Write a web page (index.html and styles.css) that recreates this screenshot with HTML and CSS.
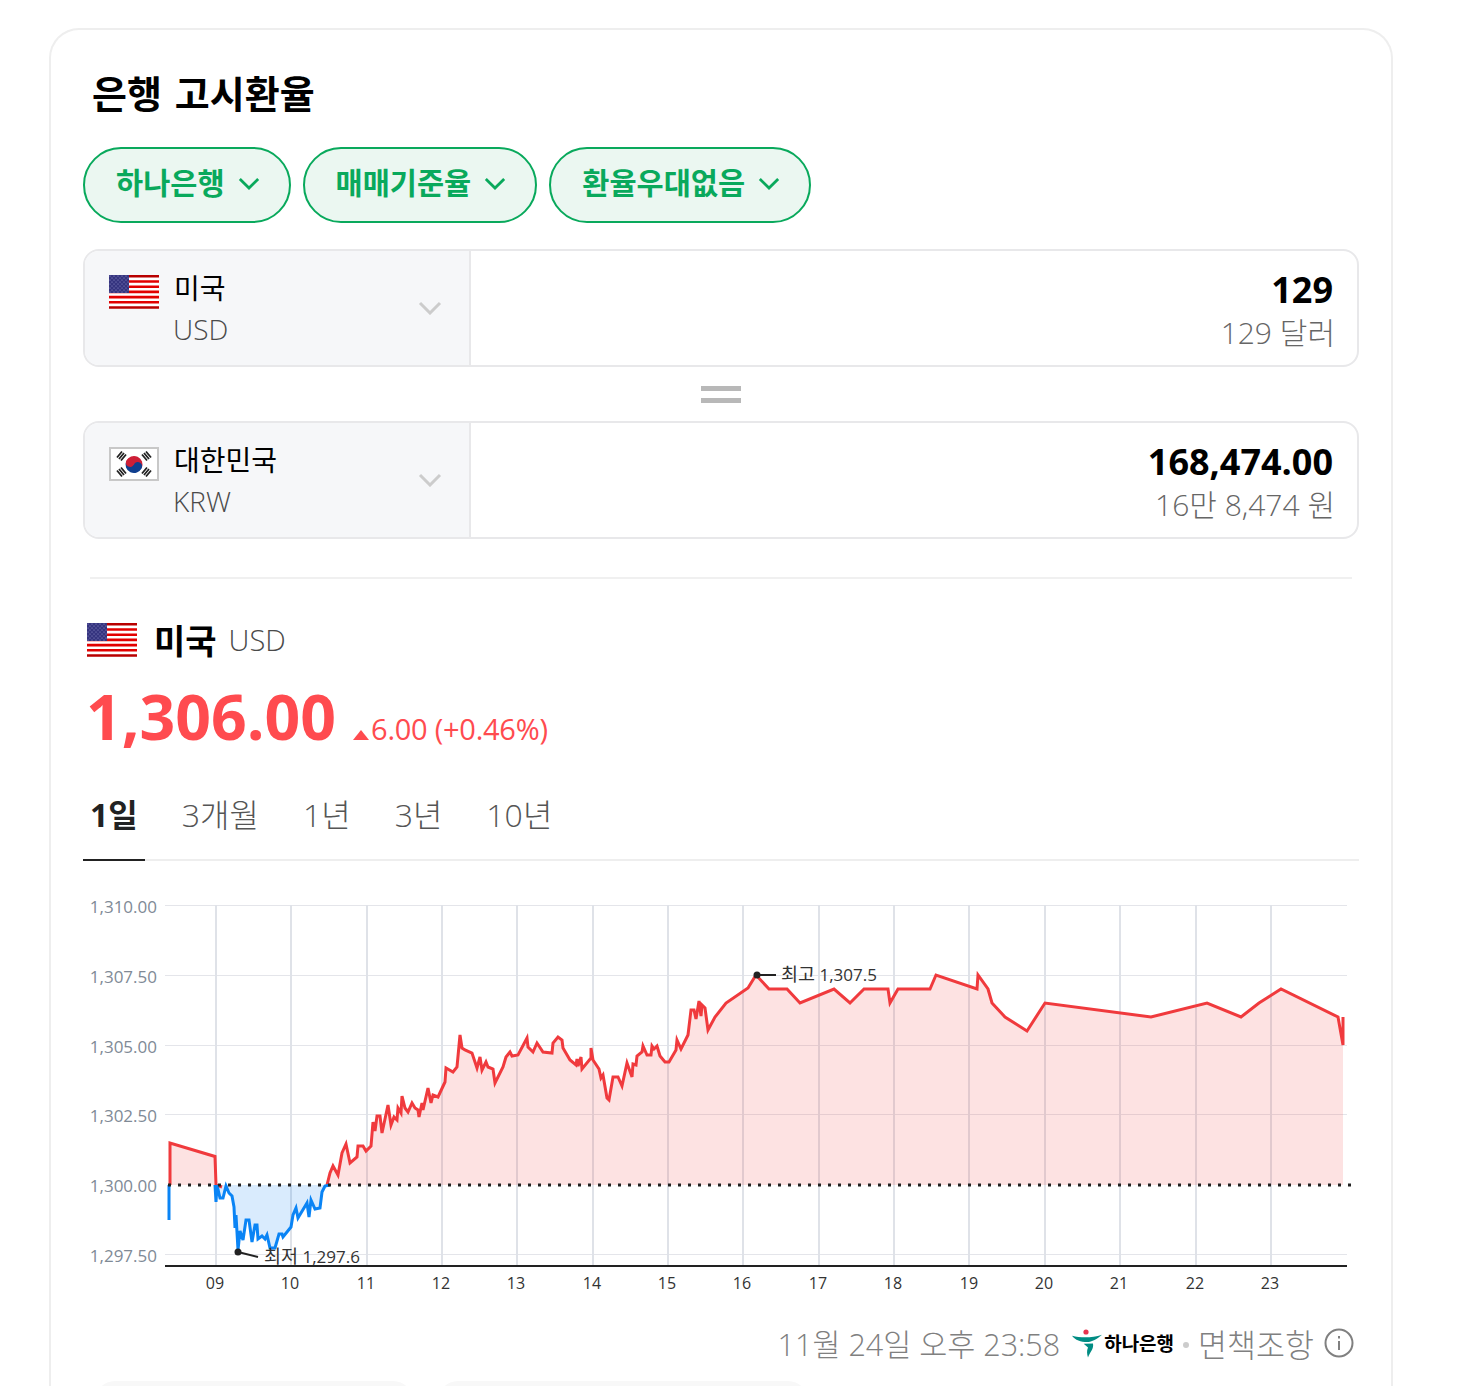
FILE: index.html
```html
<!DOCTYPE html>
<html lang="ko">
<head>
    <meta charset="UTF-8">
    <meta name="viewport" content="width=device-width, initial-scale=1.0">
    <title>은행 고시환율</title>
    <link rel="stylesheet" href="styles.css">
</head>
<body>
    <svg class="defs" width="0" height="0">
        <defs>
            <pattern id="stars" width="4" height="4" patternUnits="userSpaceOnUse">
                <rect width="4" height="4" fill="#35347f"/>
                <circle cx="1" cy="1" r="0.500" fill="#a9a8e0"/>
                <circle cx="3" cy="3" r="0.500" fill="#a9a8e0"/>
            </pattern>
            <symbol id="flag-us" viewBox="0 0 50 34">
                <rect width="50" height="34" fill="#fff"/>
                <path d="M0 6.500h50M0 11.700h50M0 16.900h50M0 22.100h50M0 27.300h50" stroke="#e20000" stroke-width="2.600"/>
                <path d="M0 1.300h50M0 32.500h50" stroke="#b80000" stroke-width="2.600"/>
                <rect width="20" height="18" fill="url(#stars)"/>
            </symbol>
            <symbol id="flag-kr" viewBox="0 0 50 34">
                <rect x="1" y="1" width="48" height="32" fill="#fff" stroke="#c8c8c8" stroke-width="2"/>
                <g transform="rotate(25 25 17.500)">
                    <path d="M16.500 17.500a8.500 8.500 0 0 1 17 0z" fill="#cd1f36"/>
                    <path d="M16.500 17.500a8.500 8.500 0 0 0 17 0z" fill="#0f3f8f"/>
                    <circle cx="20.750" cy="17.500" r="4.250" fill="#cd1f36"/>
                    <circle cx="29.250" cy="17.500" r="4.250" fill="#0f3f8f"/>
                </g>
                <g stroke="#222" stroke-width="1.800">
                    <path d="M8 10.500l5-6M10 12l5-6M12 13.500l5-6"/>
                    <path d="M33 7.500l5 6M35 6l5 6M37 4.500l5 6"/>
                    <path d="M8 23.500l5 6M10 22l5 6M12 20.500l5 6"/>
                    <path d="M33 26.500l5-6M35 28l5-6M37 29.500l5-6"/>
                </g>
            </symbol>
        </defs>
    </svg>

    <div class="card">
        <h1 class="title">은행 고시환율</h1>

        <div class="chips">
            <button class="chip"><span class="chip-label">하나은행</span>
                <svg class="chip-arrow" viewBox="0 0 24 14"><path d="M2 2l10 10L22 2"/></svg>
            </button>
            <button class="chip"><span class="chip-label">매매기준율</span>
                <svg class="chip-arrow" viewBox="0 0 24 14"><path d="M2 2l10 10L22 2"/></svg>
            </button>
            <button class="chip"><span class="chip-label">환율우대없음</span>
                <svg class="chip-arrow" viewBox="0 0 24 14"><path d="M2 2l10 10L22 2"/></svg>
            </button>
        </div>

        <div class="convert">
            <div class="convert-left">
                <svg class="flag"><use href="#flag-us"/></svg>
                <div class="country">
                    <div class="country-name">미국</div>
                    <div class="country-code">USD</div>
                </div>
                <svg class="select-arrow" viewBox="0 0 24 14"><path d="M2 2l10 10L22 2"/></svg>
            </div>
            <div class="convert-right">
                <div class="amount">129</div>
                <div class="amount-text">129 달러</div>
            </div>
        </div>

        <div class="equals"><span></span><span></span></div>

        <div class="convert">
            <div class="convert-left">
                <svg class="flag"><use href="#flag-kr"/></svg>
                <div class="country">
                    <div class="country-name">대한민국</div>
                    <div class="country-code">KRW</div>
                </div>
                <svg class="select-arrow" viewBox="0 0 24 14"><path d="M2 2l10 10L22 2"/></svg>
            </div>
            <div class="convert-right">
                <div class="amount">168,474.00</div>
                <div class="amount-text">16만 8,474 원</div>
            </div>
        </div>

        <hr class="divider">

        <div class="rate-head">
            <svg class="flag"><use href="#flag-us"/></svg>
            <span class="rate-name">미국</span>
            <span class="rate-code">USD</span>
        </div>

        <div class="price">
            <span class="price-now">1,306.00</span>
            <span class="price-up"></span>
            <span class="price-diff">6.00 (+0.46%)</span>
        </div>

        <div class="tabs">
            <a class="tab active">1일</a>
            <a class="tab">3개월</a>
            <a class="tab">1년</a>
            <a class="tab">3년</a>
            <a class="tab">10년</a>
        </div>

        <svg class="chart" viewBox="83 880 1276 420">
            <g class="grid">
                <path d="M165 905.500H1347M165 975.500H1347M165 1045.500H1347M165 1114.500H1347M165 1254.500H1347"/>
                <path d="M216 905V1265M291 905V1265M367 905V1265M442 905V1265M517 905V1265M593 905V1265M668 905V1265M743 905V1265M819 905V1265M894 905V1265M969 905V1265M1045 905V1265M1120 905V1265M1196 905V1265M1271 905V1265"/>
            </g>

            <g class="axis-y">
                <text x="157" y="913">1,310.00</text>
                <text x="157" y="983">1,307.50</text>
                <text x="157" y="1053">1,305.00</text>
                <text x="157" y="1122">1,302.50</text>
                <text x="157" y="1192">1,300.00</text>
                <text x="157" y="1262">1,297.50</text>
            </g>

            <path class="area-blue" d="M216 1185L217 1185 220 1198 223 1198 226 1186 229 1193 232 1196 234 1207 235 1228 236 1215 238 1250 240 1231 243 1240 246 1220 249 1220 252 1242 255 1225 257 1225 258 1239 262 1236 265 1239 267 1235 270 1248 275 1248 279 1234 282 1234 283 1237 291 1227 293 1215 296 1208 298 1218 307 1203 309 1217 311 1200 315 1209 320 1208 322 1192 325 1186 330 1185Z"/>
            <path class="area-red" d="M170 1185V1143L215 1156.500 216 1185ZM327 1185L330 1173 333 1166 338 1175 342 1153 346 1144 350 1163 357 1157 358 1146 363 1146 366 1151 371 1146 373 1122 375 1131 377 1116 380 1116 382 1133 388 1105 391 1125 394 1117 397 1120 398 1108 401 1113 402 1096 405 1108 408 1112 412 1103 415 1108 418 1110 419 1117 422 1103 423 1110 428 1088 431 1103 433 1095 438 1097 445 1082 446 1068 453 1072 457 1067 460 1035 462 1048 465 1050 472 1053 477 1068 480 1057 482 1070 486 1062 488 1067 493 1069 495 1083 503 1067 506 1057 510 1052 512 1056 518 1055 527 1038 528 1047 533 1052 537 1043 543 1052 552 1053 553 1043 558 1037 562 1040 563 1048 570 1060 576 1065 577 1059 578 1066 581 1057 582 1069 591 1058 591 1048 593 1060 599 1069 601 1078 603 1075 607 1098 609 1100 613 1077 618 1077 622 1086 627 1063 632 1077 633 1064 636 1065 637 1056 642 1052 643 1046 647 1055 651 1055 652 1046 654 1049 657 1046 660 1056 665 1062 669 1062 676 1050 677 1040 681 1049 688 1035 691 1010 694 1010 696 1019 699 1001 701 1016 702 1005 705 1008 708 1030 715 1017 726 1003 748 988 756 975 769 989 787 989 800 1003 834 989 850 1003 864 989 888 989 890 1003 898 989 930 989 936 975 977 989 978 975 988 989 992 1003 1005 1017 1027 1031 1045 1003 1151 1017 1207 1003 1241 1017 1259 1003 1281 989 1338 1017 1343 1045 1343 1185Z"/>

            <polyline class="line-red" points="170,1185 170,1143 215,1156.500 216,1185 222,1187"/>
            <polyline class="line-red" points="327,1185 330,1173 333,1166 338,1175 342,1153 346,1144 350,1163 357,1157 358,1146 363,1146 366,1151 371,1146 373,1122 375,1131 377,1116 380,1116 382,1133 388,1105 391,1125 394,1117 397,1120 398,1108 401,1113 402,1096 405,1108 408,1112 412,1103 415,1108 418,1110 419,1117 422,1103 423,1110 428,1088 431,1103 433,1095 438,1097 445,1082 446,1068 453,1072 457,1067 460,1035 462,1048 465,1050 472,1053 477,1068 480,1057 482,1070 486,1062 488,1067 493,1069 495,1083 503,1067 506,1057 510,1052 512,1056 518,1055 527,1038 528,1047 533,1052 537,1043 543,1052 552,1053 553,1043 558,1037 562,1040 563,1048 570,1060 576,1065 577,1059 578,1066 581,1057 582,1069 591,1058 591,1048 593,1060 599,1069 601,1078 603,1075 607,1098 609,1100 613,1077 618,1077 622,1086 627,1063 632,1077 633,1064 636,1065 637,1056 642,1052 643,1046 647,1055 651,1055 652,1046 654,1049 657,1046 660,1056 665,1062 669,1062 676,1050 677,1040 681,1049 688,1035 691,1010 694,1010 696,1019 699,1001 701,1016 702,1005 705,1008 708,1030 715,1017 726,1003 748,988 756,975 769,989 787,989 800,1003 834,989 850,1003 864,989 888,989 890,1003 898,989 930,989 936,975 977,989 978,975 988,989 992,1003 1005,1017 1027,1031 1045,1003 1151,1017 1207,1003 1241,1017 1259,1003 1281,989 1338,1017 1343,1045 1343,1017"/>
            <polyline class="line-blue" points="169,1185 169,1220"/>
            <polyline class="line-blue" points="215,1185 216,1202 217,1185 220,1198 223,1198 226,1186 229,1193 232,1196 234,1207 235,1228 236,1215 238,1250 240,1231 243,1240 246,1220 249,1220 252,1242 255,1225 257,1225 258,1239 262,1236 265,1239 267,1235 270,1248 275,1248 279,1234 282,1234 283,1237 291,1227 293,1215 296,1208 298,1218 307,1203 309,1217 311,1200 315,1209 320,1208 322,1192 325,1186 330,1185"/>

            <line class="zero-line" x1="168" y1="1185" x2="1352" y2="1185"/>
            <path class="baseline" d="M165 1266H1347"/>

            <g class="axis-x">
                <text x="215" y="1289">09</text>
                <text x="290" y="1289">10</text>
                <text x="366" y="1289">11</text>
                <text x="441" y="1289">12</text>
                <text x="516" y="1289">13</text>
                <text x="592" y="1289">14</text>
                <text x="667" y="1289">15</text>
                <text x="742" y="1289">16</text>
                <text x="818" y="1289">17</text>
                <text x="893" y="1289">18</text>
                <text x="969" y="1289">19</text>
                <text x="1044" y="1289">20</text>
                <text x="1119" y="1289">21</text>
                <text x="1195" y="1289">22</text>
                <text x="1270" y="1289">23</text>
            </g>

            <circle class="mark" cx="757" cy="975" r="3.500"/>
            <line class="mark-line" x1="757" y1="975" x2="776" y2="975"/>
            <text class="mark-text" x="781" y="981"><tspan class="mark-label">최고</tspan> 1,307.5</text>
            <circle class="mark" cx="238" cy="1252" r="3.500"/>
            <line class="mark-line" x1="238" y1="1252" x2="258" y2="1257"/>
            <text class="mark-text" x="264" y="1263"><tspan class="mark-label">최저</tspan> 1,297.6</text>
        </svg>

        <div class="source">
            <span>11월 24일 오후 23:58</span>
            <span class="bank">
                <svg class="bank-logo" viewBox="0 0 32 30">
                    <circle cx="14" cy="4" r="2.600" fill="#e8344e"/>
                    <path d="M0 7.700C9 10 20 10 30 6.700 25 11 20 14 15 14 9 14 3 12 0 7.700z" fill="#008c83"/>
                    <path d="M11.700 15.700L21 15.500C22 21 18 24 16 29.500 15 26 14.500 23 16 19.500z" fill="#008c83"/>
                </svg>
                <b class="bank-name">하나은행</b>
            </span>
            <span class="dot"></span>
            <span class="notice">면책조항</span>
            <svg class="info" viewBox="0 0 30 30">
                <circle cx="15" cy="15" r="13.500"/>
                <path d="M15 13v9M15 8v2.500"/>
            </svg>
        </div>

        <div class="more">
            <div class="more-item first"></div>
            <div class="more-item second"></div>
        </div>
    </div>
</body>
</html>
```

FILE: styles.css
```css
html, body {
    margin: 0;
    padding: 0;
    height: 1386px;
    overflow: hidden;
    background-color: #fff;
}
body {
    font-family: "Open Sans", "Noto Sans CJK KR", sans-serif;
    color: #000;
}
.defs {
    display: block;
    height: 0;
}
.card {
    box-sizing: border-box;
    width: 1344px;
    height: 1400px;
    margin: 28px 0 0 49px;
    padding: 0 32px;
    border: 2px solid #eee;
    border-bottom: none;
    border-radius: 30px 30px 0 0;
}
.title {
    margin: 0;
    padding: 38px 0 0 9px;
    height: 79px;
    box-sizing: border-box;
    font-size: 38px;
    line-height: 50px;
    font-weight: 700;
    word-spacing: 3px;
}
.chips {
    display: flex;
    gap: 12px;
    margin-top: 38px;
}
.chip {
    display: flex;
    align-items: center;
    gap: 13px;
    height: 76px;
    padding: 0 29px 4px 31px;
    border: 2px solid #09a95c;
    border-radius: 38px;
    background-color: #ebf7f1;
    color: #09a95c;
    font-family: inherit;
    font-size: 29.500px;
    font-weight: 700;
    white-space: nowrap;
}
.chip-label {
    margin-top: -4px;
}
.chip-arrow {
    width: 22px;
    height: 13px;
    fill: none;
    stroke: #09a95c;
    stroke-width: 3;
}
.convert {
    display: flex;
    box-sizing: border-box;
    height: 118px;
    border: 2px solid #e8e8ea;
    border-radius: 16px;
    overflow: hidden;
}
.chips + .convert {
    margin-top: 26px;
}
.convert-left {
    display: flex;
    position: relative;
    box-sizing: border-box;
    width: 386px;
    padding: 24px 24px;
    background-color: #f6f7f9;
    border-right: 2px solid #e8e8ea;
}
.flag {
    display: block;
    width: 50px;
    height: 34px;
    flex: none;
}
.country {
    margin-left: 15px;
    margin-top: -8px;
}
.country-name {
    font-size: 28px;
    line-height: 42px;
}
.country-code {
    margin-left: -1px;
    font-size: 28px;
    line-height: 40px;
    color: #4a4a4a;
    font-weight: 300;
}
.select-arrow {
    position: absolute;
    right: 27px;
    top: 50px;
    width: 24px;
    height: 14px;
    fill: none;
    stroke: #ccc;
    stroke-width: 3;
}
.convert-right {
    flex: 1;
    padding: 17px 24px 0 0;
    text-align: right;
}
.amount {
    font-size: 36px;
    line-height: 44px;
    font-weight: 700;
}
.amount-text {
    margin-right: -2px;
    font-size: 30px;
    line-height: 42px;
    font-weight: 300;
    color: #666;
}
.equals {
    display: flex;
    flex-direction: column;
    align-items: center;
    justify-content: center;
    gap: 7px;
    height: 54px;
}
.equals span {
    display: block;
    width: 40px;
    height: 5px;
    background-color: #b8b8b8;
}
.divider {
    margin: 38px 7px 0;
    height: 2px;
    border: none;
    background-color: #f0f0f0;
}
.rate-head {
    display: flex;
    align-items: center;
    height: 50px;
    margin-top: 35px;
    padding-left: 4px;
}
.rate-head .flag {
    margin-top: 2px;
}
.rate-name {
    margin-left: 17px;
    font-size: 34px;
    font-weight: 700;
}
.rate-code {
    margin-left: 12px;
    font-size: 29px;
    font-weight: 300;
    color: #4a4a4a;
}
.price {
    display: flex;
    align-items: baseline;
    height: 78px;
    margin-top: 13px;
    padding-left: 3px;
    color: #ff4b4f;
}
.price-now {
    font-size: 62.500px;
    line-height: 78px;
    font-weight: 700;
}
.price-up {
    width: 0;
    height: 0;
    margin-left: 17px;
    margin-right: 2px;
    border-left: 8px solid transparent;
    border-right: 8px solid transparent;
    border-bottom: 10px solid #ff4b4f;
}
.price-diff {
    font-size: 29px;
    font-weight: 400;
    letter-spacing: -0.250px;
}
.tabs {
    display: flex;
    gap: 30px;
    box-sizing: border-box;
    height: 79px;
    margin-top: 27px;
    border-bottom: 2px solid #eee;
}
.tab {
    box-sizing: border-box;
    height: 79px;
    padding: 8px 7px 0;
    font-size: 32px;
    line-height: 50px;
    font-weight: 300;
    color: #555;
}
.tab.active {
    color: #222;
    font-weight: 700;
    border-bottom: 2px solid #222;
}
.chart {
    display: block;
    width: 1276px;
    height: 420px;
    margin-top: 19px;
}
.grid path {
    fill: none;
    stroke: #e4e5ea;
    stroke-width: 1;
}
.grid path + path {
    stroke: #dfe2e8;
    stroke-width: 2;
}
.axis-y text {
    font-size: 17px;
    fill: #808a96;
    text-anchor: end;
}
.axis-x text {
    font-size: 16px;
    fill: #333;
    text-anchor: middle;
}
.area-red {
    fill: rgba(240, 60, 60, 0.15);
}
.area-blue {
    fill: rgba(0, 120, 240, 0.15);
}
.line-red,
.line-blue {
    fill: none;
    stroke-width: 3;
    stroke-linejoin: miter;
}
.line-red {
    stroke: #f03a3d;
}
.line-blue {
    stroke: #0a84f5;
}
.zero-line {
    stroke: #222;
    stroke-width: 3;
    stroke-dasharray: 3 7;
}
.baseline {
    stroke: #222;
    stroke-width: 2;
}
.mark {
    fill: #222;
}
.mark-line {
    stroke: #222;
    stroke-width: 2;
}
.mark-text {
    font-size: 17px;
    fill: #333;
}
.mark-label {
    font-size: 18.500px;
}
.source {
    display: flex;
    align-items: center;
    justify-content: flex-end;
    height: 40px;
    margin-top: 23px;
    padding-right: 5px;
    font-size: 30.500px;
    font-weight: 300;
    color: #808080;
}
.notice {
    font-size: 31.500px;
}
.bank {
    display: flex;
    align-items: center;
    margin-left: 12px;
}
.bank-logo {
    width: 32px;
    height: 30px;
}
.bank-name {
    font-size: 19px;
    font-weight: 700;
    color: #000;
}
.dot {
    width: 6px;
    height: 6px;
    margin: 4px 9px 0;
    border-radius: 50%;
    background-color: #ccc;
}
.info {
    width: 30px;
    height: 30px;
    margin-left: 10px;
    fill: none;
    stroke: #808080;
    stroke-width: 2;
}
.more {
    display: flex;
    gap: 25px;
    margin-top: 18px;
    padding-left: 12px;
}
.more-item {
    height: 40px;
    border-radius: 20px;
    background-color: #f8f8f8;
}
.more-item.first {
    width: 318px;
}
.more-item.second {
    width: 370px;
}
```
